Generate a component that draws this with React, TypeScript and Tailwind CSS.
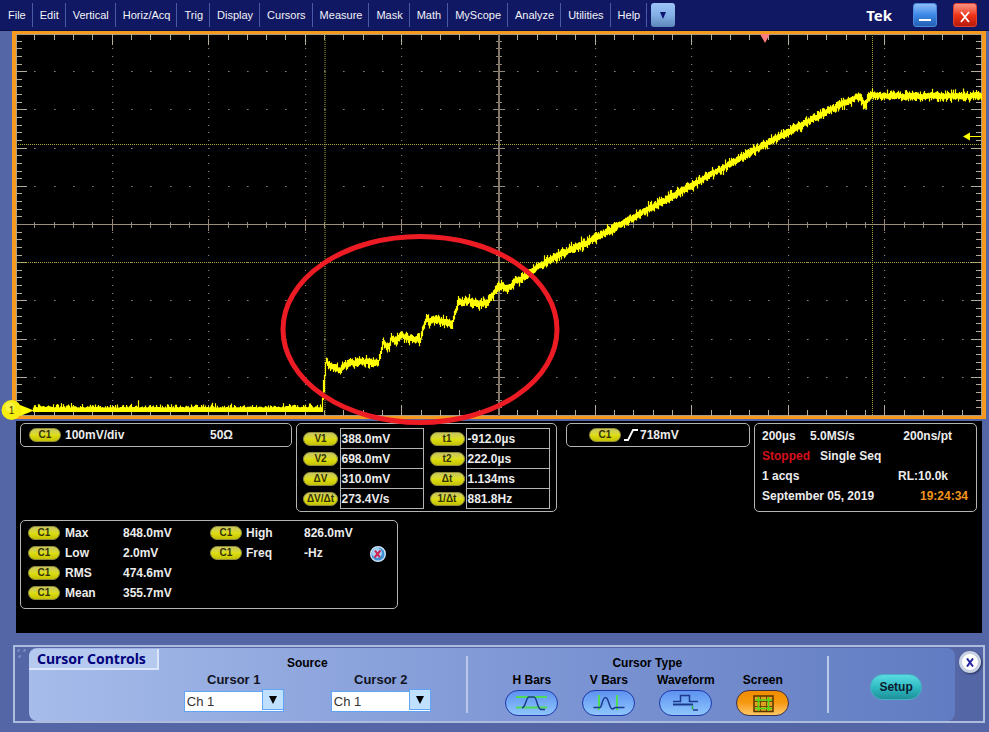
import React from "react";

const LEFT = 16;
const TOP = 34;
const WIDTH = 966;
const HEIGHT = 382;
const RIGHT = LEFT + WIDTH;
const BOTTOM = TOP + HEIGHT;
const STEP_X = WIDTH / 50;
const STEP_Y = HEIGHT / 50;

const MENUS = [
  "File", "Edit", "Vertical", "Horiz/Acq", "Trig", "Display", "Cursors",
  "Measure", "Mask", "Math", "MyScope", "Analyze", "Utilities", "Help",
];

/* Mean level of channel 1 after the step, as [x, y] knots. */
const KNOTS: [number, number][] = [
  [326, 360], [328, 364], [332, 367], [340, 371], [343, 366], [348, 364], [355, 362],
  [360, 361], [366, 362], [378, 363], [380, 354], [383, 342], [386, 347], [389, 345],
  [391, 338], [394, 341], [401, 335], [405, 337], [412, 339], [420, 340], [423, 328],
  [426, 318], [429, 322], [433, 319], [440, 321], [452, 323], [455, 312], [458, 300],
  [462, 304], [466, 300], [472, 302], [478, 304], [486, 303], [492, 295], [497, 287],
  [502, 286], [508, 289], [515, 281], [524, 277], [532, 271], [545, 262], [560, 255],
  [595, 238], [692, 185], [765, 144], [830, 110], [858, 96], [861, 99], [864, 105],
  [868, 98], [872, 95], [890, 96], [981, 96],
];

function levelAt(x: number): number {
  for (let i = 1; i < KNOTS.length; i++) {
    const [x1, y1] = KNOTS[i];
    if (x <= x1) {
      const [x0, y0] = KNOTS[i - 1];
      return y0 + ((y1 - y0) * (x - x0)) / (x1 - x0);
    }
  }
  return KNOTS[KNOTS.length - 1][1];
}

function buildTrace(): string {
  let seed = 4711;
  const rand = () => {
    seed = (seed * 16807) % 2147483647;
    return seed / 2147483647;
  };
  let d = "";
  for (let x = 33; x <= 322; x++) {
    const spike = x === 138 ? 5 : 0;
    d += `M${x + 0.5} ${(407.5 - rand() * rand() * 5 - spike).toFixed(1)}V412`;
  }
  d += "M322.5 408V398M323.5 400V380M324.5 392V375M325.5 376V362";
  for (let x = 326; x <= 981; x++) {
    const y = levelAt(x) + (rand() - 0.5) * 2;
    const up = 2.6 + rand() * rand() * 5;
    const down = 2.6 + rand() * rand() * 5;
    d += `M${x + 0.5} ${(y - up).toFixed(1)}V${(y + down).toFixed(1)}`;
  }
  return d;
}

function buildGrid() {
  let ticks = "";
  let dots = "";
  let axis = "";
  const midX = LEFT + WIDTH / 2;
  const midY = TOP + HEIGHT / 2;
  for (let i = 1; i < 50; i++) {
    const x = Math.round(LEFT + i * STEP_X) - 0.5;
    const y = Math.round(TOP + i * STEP_Y) - 0.5;
    const major = i % 5 === 0;
    const edge = major ? 11 : 6;
    const half = major ? 6 : 3;
    ticks += `M${x} ${TOP}v${edge}M${x} ${BOTTOM}v${-edge}`;
    ticks += `M${LEFT} ${y}h${edge}M${RIGHT} ${y}h${-edge}`;
    axis += `M${x} ${midY - half}v${half * 2}M${midX - half} ${y}h${half * 2}`;
    for (let k = 1; k < 10; k++) {
      const gx = Math.round(LEFT + k * 5 * STEP_X);
      const gy = Math.round(TOP + k * 5 * STEP_Y);
      if (k !== 5) {
        dots += `M${gx - 1} ${y}h1.2M${x - 0.5} ${gy - 0.5}h1.6`;
      }
    }
  }
  return { ticks, dots, axis, midX, midY };
}

const TRACE = buildTrace();
const GRID = buildGrid();

function Scope() {
  return (
    <div className="relative z-10 border-x-4 border-y-3 border-[#f59a1e] bg-black">
      <svg
        viewBox={`${LEFT} ${TOP} ${WIDTH} ${HEIGHT}`}
        className="block h-auto w-full overflow-visible"
        role="img"
        aria-label="Channel 1 waveform"
      >
        <rect x={LEFT + 0.5} y={TOP + 0.5} width={WIDTH - 1} height={HEIGHT - 1} fill="none" stroke="#a89c86" />
        <path d={GRID.dots} stroke="#85827c" fill="none" />
        <path d={GRID.ticks} stroke="#b5ac9b" fill="none" />
        <path d={GRID.axis} stroke="#95897a" fill="none" />
        <path d={`M${GRID.midX} ${TOP}V${BOTTOM}`} stroke="#84786a" strokeWidth="2" />
        <path d={`M${LEFT} ${GRID.midY - 0.5}H${RIGHT}`} stroke="#9a8e7e" />
        <path
          d={`M325 ${TOP}V${BOTTOM}M872.5 ${TOP}V${BOTTOM}M${LEFT} 144.5H${RIGHT}M${LEFT} 262.5H${RIGHT}`}
          stroke="#a8a840"
          strokeDasharray="1 1"
          fill="none"
        />
        <path d={TRACE} stroke="#ffff00" strokeWidth="1.2" fill="none" />
        <path d="M760 34h10l-5 9z" fill="#ff7d7d" />
        <path d="M963 136.5l7-4v8zM969 136h12v1h-12z" fill="#ffff00" />
        <path d="M20 405l14 5.5-14 5.5z" fill="#ffff00" />
        <circle cx="11.5" cy="410" r="10" fill="#f5ee10" />
        <circle cx="10" cy="407" r="5" fill="#fffb70" opacity="0.5" />
        <text x="11.5" y="413.5" textAnchor="middle" className="font-['Liberation_Sans',Arial,sans-serif] text-[10px]" fill="#3c3a00">
          1
        </text>
        <ellipse cx="420" cy="329.5" rx="137" ry="93" fill="none" stroke="#ed1c24" strokeWidth="5" />
      </svg>
    </div>
  );
}

function Pill({ children, wide = false }: { children: React.ReactNode; wide?: boolean }) {
  return (
    <span
      className={`inline-flex h-[14px] shrink-0 items-center justify-center rounded-full border border-[#8f8c3c] bg-linear-to-b from-[#c9c65a] via-[#dede14] to-[#c4c200] text-[10px] leading-none font-bold text-[#33320a] ${
        wide ? "w-[35px]" : "w-[32px]"
      }`}
    >
      {children}
    </span>
  );
}

const CURSOR_ROWS = [
  ["V1", "388.0mV", "t1", "-912.0µs"],
  ["V2", "698.0mV", "t2", "222.0µs"],
  ["ΔV", "310.0mV", "Δt", "1.134ms"],
  ["ΔV/Δt", "273.4V/s", "1/Δt", "881.8Hz"],
];

const MEASUREMENTS = [
  ["Max", "848.0mV", "High", "826.0mV"],
  ["Low", "2.0mV", "Freq", "-Hz"],
  ["RMS", "474.6mV"],
  ["Mean", "355.7mV"],
];

const BOX = "rounded-[5px] border border-[#b4b4b4]";

function Readouts() {
  return (
    <section className="mx-1 mt-0.5 bg-black pt-0.5 pr-[5px] pb-6 pl-1 text-[12px] leading-5 font-bold text-[#ececec]">
      <div className="flex items-start">
        <div className={`flex h-6 flex-1 items-center pl-2 ${BOX}`}>
          <Pill>C1</Pill>
          <span className="ml-1 w-[145px]">100mV/div</span>
          <span>50Ω</span>
        </div>
        <div className={`ml-1 h-[89px] w-[261px] pt-1 pl-[6px] ${BOX}`}>
          <table className="border-collapse">
            <tbody>
              {CURSOR_ROWS.map(([a, av, b, bv]) => (
                <tr key={a} className="h-5">
                  <th className="w-[37px] p-0 text-left leading-none"><Pill wide>{a}</Pill></th>
                  <td className="w-[83px] border border-[#b4b4b4] p-0 pl-px leading-[18px]">{av}</td>
                  <th className="w-[43px] p-0 pl-[6px] text-left leading-none"><Pill wide>{b}</Pill></th>
                  <td className="w-[83px] border border-[#b4b4b4] p-0 pl-px leading-[18px]">{bv}</td>
                </tr>
              ))}
            </tbody>
          </table>
        </div>
        <div className={`ml-[9px] flex h-6 w-[184px] items-center pl-[22px] ${BOX}`}>
          <Pill>C1</Pill>
          <svg viewBox="0 0 14 12" className="ml-[3px] h-3 w-[14px]" aria-hidden="true">
            <path d="M0 11H4L9 1H14" fill="none" stroke="#fff" strokeWidth="1.8" />
          </svg>
          <span className="ml-0.5">718mV</span>
        </div>
        <div className={`ml-1 h-[89px] w-[223px] pt-0.5 pl-[7px] ${BOX}`}>
          <div className="flex pr-6">
            <span className="w-12">200µs</span>
            <span>5.0MS/s</span>
            <span className="ml-auto">200ns/pt</span>
          </div>
          <div className="flex gap-[10px]">
            <span className="text-[#d6101c]">Stopped</span>
            <span>Single Seq</span>
          </div>
          <div className="flex justify-between pr-7">
            <span>1 acqs</span>
            <span>RL:10.0k</span>
          </div>
          <div className="flex justify-between pr-2">
            <span>September 05, 2019</span>
            <span className="text-[#f0941e]">19:24:34</span>
          </div>
        </div>
      </div>
      <div className={`mt-2 flex h-[89px] w-[378px] pt-0.5 pl-[7px] ${BOX}`}>
        <table className="border-collapse self-start">
          <tbody>
            {MEASUREMENTS.map(([a, av, b, bv]) => (
              <tr key={a} className="h-5">
                <td className="w-[37px] p-0 leading-none"><Pill>C1</Pill></td>
                <th className="w-[58px] p-0 text-left">{a}</th>
                <td className="w-[87px] p-0">{av}</td>
                <td className="w-9 p-0 leading-none">{b && <Pill>C1</Pill>}</td>
                <th className="w-[58px] p-0 text-left">{b}</th>
                <td className="w-[66px] p-0">{bv}</td>
              </tr>
            ))}
          </tbody>
        </table>
        <button type="button" aria-label="Clear measurements" className="mt-[23px] size-4">
          <svg viewBox="0 0 16 16" className="size-4">
            <circle cx="8" cy="8" r="7.3" fill="#3d8fd6" stroke="#cfe6f8" strokeWidth="1.4" />
            <circle cx="7" cy="7" r="5" fill="#a8d2f2" />
            <path d="M5 4.5l5 7M10.5 4.5l-6 7" stroke="#cf2450" strokeWidth="2" />
          </svg>
        </button>
      </div>
    </section>
  );
}

function SourceSelect({ id, label }: { id: string; label: string }) {
  return (
    <div className="flex flex-col items-center">
      <label htmlFor={id} className="text-[13px] leading-[18px] font-bold text-[#10131f]">{label}</label>
      <div className="relative h-[21px] w-[100px]">
        <select
          id={id}
          defaultValue="Ch 1"
          className="h-full w-full appearance-none border border-[#62a4f4] bg-white pl-0.5 text-[13px] leading-none font-normal text-[#333]"
        >
          <option>Ch 1</option>
          <option>Ch 2</option>
          <option>Ch 3</option>
          <option>Ch 4</option>
        </select>
        <span className="pointer-events-none absolute inset-y-0 right-0 flex w-[22px] items-center justify-center border border-[#62a4f4] bg-[#bfe0ff]">
          <svg viewBox="0 0 8 8" className="size-2" aria-hidden="true"><path d="M0 0h8L4 8z" fill="#000" /></svg>
        </span>
      </div>
    </div>
  );
}

const CURSOR_TYPES = [
  {
    name: "H Bars",
    icon: (
      <>
        <path d="M1 5H32M1 15.5H32" stroke="#4ddc58" strokeWidth="2" />
        <path d="M7 16c4-1 4-11 7-11h5c3 0 3 12 7 12.500h4" stroke="#1c3a8c" strokeWidth="1.500" />
      </>
    ),
  },
  {
    name: "V Bars",
    icon: (
      <>
        <path d="M7 3v15M25 3v15" stroke="#4ddc58" strokeWidth="2" />
        <path d="M1.500 15.500H8c2 0 2-10 5.500-10s3.500 11.500 7 11.500c2 0 1-1.500 3-1.500h9" stroke="#1c3a8c" strokeWidth="1.500" />
      </>
    ),
  },
  {
    name: "Waveform",
    icon: (
      <>
        <path d="M4 9.500h7.500v-6h9v6H29" stroke="#1c3a8c" strokeWidth="1.500" />
        <path d="M4 12.500h20" stroke="#1c3a8c" strokeWidth="2" />
        <path d="M23.500 13.500v4" stroke="#2fb04a" strokeWidth="1.500" />
        <path d="M24 18h5" stroke="#1c3a8c" strokeWidth="1.500" />
      </>
    ),
  },
  {
    name: "Screen",
    icon: (
      <>
        <path d="M8 4h19v15.500H8z" fill="#e3a01c" stroke="#5a3200" strokeWidth="1.500" />
        <path d="M8 9.500h19M8 14.500h19M14.500 4v15M20.500 4v15" stroke="#6b4a00" />
        <path d="M9 8h17M9 16.500h17M12.500 5v14M22.500 5v14" stroke="#50d81c" strokeWidth="1.500" />
      </>
    ),
  },
];

function CursorControls() {
  return (
    <section className="mt-3 mr-px ml-px flex h-[78px] border-2 border-[#adbbdc] font-bold text-black">
      <div className="w-[14px] shrink-0 pt-0.5 pl-0.5">
        <svg viewBox="0 0 10 10" className="size-[10px]" aria-hidden="true">
          <path d="M0 2h2V0M6 2h2V0M1 8h2V6" fill="none" stroke="#8b9acb" strokeWidth="1.2" />
        </svg>
      </div>
      <div className="mt-px flex min-w-0 flex-1 rounded-lg bg-linear-to-r from-[#a6bcea] via-[#8199d6] to-[#617cc2]">
        <div className="flex flex-[437] items-start">
          <h2 className="mt-px h-[21px] w-[130px] shrink-0 rounded-tl-lg border-r-2 border-b-2 border-[#dce6f8] bg-[#b6c9ee] pl-2 font-['Noto_Sans','Open_Sans',sans-serif] text-[14px] leading-5 text-[#00007c]">
            Cursor Controls
          </h2>
          <div role="group" aria-labelledby="source-title" className="flex flex-1 flex-col items-center pt-2 pr-[10px]">
            <h3 id="source-title" className="text-[12px] leading-[15px]">Source</h3>
            <div className="flex gap-[47px]">
              <SourceSelect id="cursor1" label="Cursor 1" />
              <SourceSelect id="cursor2" label="Cursor 2" />
            </div>
          </div>
        </div>
        <div className="my-2 w-0.5 bg-[#b9c9ea]" />
        <div className="flex flex-[360] flex-col items-center pt-2">
          <h3 className="text-[12px] leading-[15px]">Cursor Type</h3>
          <div className="flex">
            {CURSOR_TYPES.map(({ name, icon }) => {
              const on = name === "Screen";
              return (
                <div key={name} className="flex w-[77px] flex-col items-center">
                  <span id={`type-${name[0]}`} className="text-[12px] leading-[19px] whitespace-nowrap">{name}</span>
                  <button
                    type="button"
                    aria-labelledby={`type-${name[0]}`}
                    aria-pressed={on}
                    className={`flex h-[26px] w-[53px] items-center justify-center rounded-full border ${
                      on
                        ? "border-[#3c3050] bg-linear-to-b from-[#f08c00] via-[#f69a10] to-[#ffc860]"
                        : "border-[#2038a8] bg-linear-to-b from-[#5e92f0] to-[#8fc6fc]"
                    }`}
                  >
                    <svg viewBox="0 0 34 22" className="h-[22px] w-[34px]" fill="none" aria-hidden="true">{icon}</svg>
                  </button>
                </div>
              );
            })}
          </div>
        </div>
        <div className="my-2 w-0.5 bg-[#b9c9ea]" />
        <div className="flex flex-[118] items-center justify-center pt-1 pl-2">
          <button
            type="button"
            className="h-[26px] w-[52px] rounded-full border border-[#48b0c4] bg-linear-to-b from-[#58dce0] via-[#30bcc4] to-[#1c9098] text-[12px] text-[#0c1c30]"
          >
            Setup
          </button>
        </div>
      </div>
      <div className="flex w-[28px] shrink-0 justify-center pt-1 pl-0.5">
        <button
          type="button"
          aria-label="Close cursor controls"
          className="flex size-[22px] items-center justify-center rounded-full border-3 border-[#c8d0e4] bg-white shadow-[1px_1px_2px_#26305c]"
        >
          <svg viewBox="0 0 8 9" className="h-[9px] w-2" aria-hidden="true">
            <path d="M1 0.500l6 8M7 0.500l-6 8" stroke="#2424a0" strokeWidth="2" />
          </svg>
        </button>
      </div>
    </section>
  );
}

export default function App() {
  return (
    <div className="min-h-screen bg-[#5566a6] font-['Liberation_Sans',Arial,sans-serif]">
      <header className="flex h-[31px] items-center border-b border-[#0a1048] bg-[#101863] pr-3">
        <nav className="flex h-full items-center pl-px text-[11px] text-[#f2f2f8]">
          {MENUS.map((menu) => (
            <button key={menu} type="button" className="h-6 border-r border-[#4a5aa8] pr-[6px] pl-[7px]">
              {menu}
            </button>
          ))}
          <button
            type="button"
            aria-label="More menus"
            className="ml-1 flex size-6 items-center justify-center rounded-[3px] bg-linear-to-b from-[#9cc4f8] via-[#84b0e8] to-[#5c88b8]"
          >
            <svg viewBox="0 0 6 7" className="h-[7px] w-[6px]" aria-hidden="true"><path d="M0 0h6L3 7z" fill="#0c1470" /></svg>
          </button>
        </nav>
        <span className="ml-auto font-['Noto_Sans','Open_Sans',sans-serif] text-[15px] leading-none font-bold text-white">Tek</span>
        <button
          type="button"
          aria-label="Minimize"
          className="ml-[21px] flex size-6 items-end justify-center rounded-[3px] border border-[#4a8ae0] bg-linear-to-b from-[#8cbcf4] via-[#3c88e8] to-[#2460b4] pb-[5px]"
        >
          <span className="h-0.5 w-3 bg-white" />
        </button>
        <button
          type="button"
          aria-label="Close"
          className="ml-4 flex size-6 items-center justify-center rounded-[3px] border border-[#e04030] bg-linear-to-b from-[#f89080] via-[#f03418] to-[#b81c0c]"
        >
          <svg viewBox="0 0 10 12" className="mt-1 h-3 w-[10px]" aria-hidden="true">
            <path d="M1 1l8 10M9 1L1 11" stroke="#fff" strokeWidth="1.8" />
          </svg>
        </button>
      </header>
      <main className="pr-[3px] pb-2 pl-3">
        <Scope />
        <Readouts />
        <CursorControls />
      </main>
    </div>
  );
}
